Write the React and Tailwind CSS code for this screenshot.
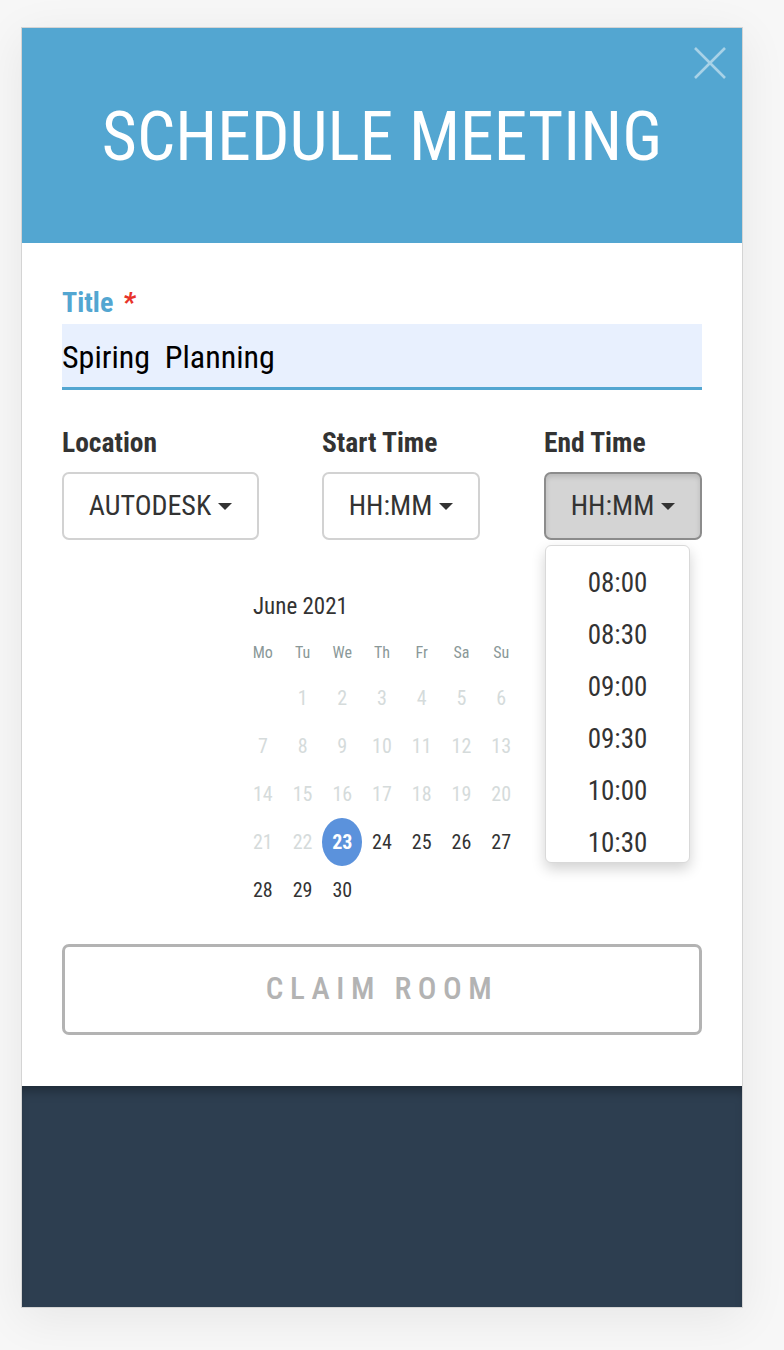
import React from "react";

function Caret() {
  return (
    <span className="ml-[7px] inline-block h-0 w-0 border-x-[7px] border-t-[7px] border-x-transparent border-t-[#333]" />
  );
}

function Dropdown({ value, width, active }) {
  return (
    <button
      className={
        "flex h-[68px] items-center justify-center rounded-[7px] border-2 text-[28px] text-[#333] " +
        (active
          ? "border-[#8c8c8c] bg-[#d4d4d4] shadow-[inset_0_3px_5px_rgba(0,0,0,0.125)]"
          : "border-[#d2d2d2] bg-white")
      }
      style={{ width }}
    >
      <span>{value}</span>
      <Caret />
    </button>
  );
}

export default function App() {
  const days = [null];
  for (let d = 1; d <= 30; d++) days.push(d);
  const heads = ["Mo", "Tu", "We", "Th", "Fr", "Sa", "Su"];
  const times = ["08:00", "08:30", "09:00", "09:30", "10:00", "10:30"];

  return (
    <div className="min-h-screen bg-[#f7f7f7] pl-[21px] pt-[27px] font-['Roboto_Condensed','Roboto',sans-serif]">
      <div className="w-[722px] border border-[#d4d4d4] bg-white shadow-[0_10px_45px_rgba(0,0,0,0.07)]">
        {/* Header */}
        <div className="relative flex h-[215px] items-center justify-center bg-[#53a6d1] pt-[4px]">
          <h1 className="text-[67.7px] font-normal leading-none text-white">
            SCHEDULE MEETING
          </h1>
          <button className="absolute right-[15px] top-[18px] h-[34px] w-[34px]">
            <svg viewBox="0 0 34 34" width="34" height="34">
              <path d="M2 2 L32 32 M32 2 L2 32" stroke="#a8d2e7" strokeWidth="2.6" fill="none" />
            </svg>
          </button>
        </div>

        {/* Body */}
        <div className="px-[40px] pb-[51px] pt-[43px]">
          <label className="block text-[28px] font-bold leading-[34px] text-[#53a6d1]">
            Title <span className="ml-[3px] italic text-[#e8332a]">*</span>
          </label>
          <div className="mt-[4px] flex h-[66px] items-center border-b-[3px] border-[#53a6d1] bg-[#e8f0fe] pt-[3px]">
            <span className="whitespace-pre text-[32px] text-black">Spiring  Planning</span>
          </div>

          <div className="relative mt-[36px] flex">
            <div className="w-[260px]">
              <div className="text-[27.5px] font-bold leading-[34px] text-[#333]">Location</div>
              <div className="mt-[12px]">
                <Dropdown value="AUTODESK" width={197} />
              </div>
            </div>
            <div className="w-[222px]">
              <div className="text-[27.5px] font-bold leading-[34px] text-[#333]">Start Time</div>
              <div className="mt-[12px]">
                <Dropdown value="HH:MM" width={158} />
              </div>
            </div>
            <div className="flex-1">
              <div className="text-[27.5px] font-bold leading-[34px] text-[#333]">End Time</div>
              <div className="mt-[12px]">
                <Dropdown value="HH:MM" width={158} active />
              </div>
            </div>

            {/* Open menu */}
            <div className="absolute left-[483px] top-[119px] z-10 h-[318px] w-[145px] overflow-hidden rounded-[6px] border border-[#d9d9d9] bg-white pt-[11px] shadow-[0_6px_14px_rgba(0,0,0,0.18)]">
              {times.map((t) => (
                <div
                  key={t}
                  className="flex h-[52px] items-center justify-center text-[27px] text-[#333]"
                >
                  {t}
                </div>
              ))}
            </div>
          </div>

          {/* Calendar */}
          <div className="mx-auto mt-[52px] w-[278px]">
            <div className="pl-[10px] text-[23px] leading-[30px] text-[#333]">June 2021</div>
            <div className="mt-[19px] grid grid-cols-7">
              {heads.map((h) => (
                <div key={h} className="flex h-[24px] items-center justify-center text-[16px] text-[#8a9898]">
                  {h}
                </div>
              ))}
            </div>
            <div className="mt-[9px] grid grid-cols-7">
              {days.map((d, i) => {
                if (d === null) return <div key={"e" + i} className="h-[48px]" />;
                const past = d < 23;
                const sel = d === 23;
                return (
                  <div
                    key={d}
                    className={
                      "flex h-[48px] items-center justify-center rounded-[50%] text-[20px] " +
                      (sel
                        ? "bg-[#5b92dc] font-bold text-white"
                        : past
                        ? "text-[#d5dbdb]"
                        : "text-[#333]")
                    }
                  >
                    {d}
                  </div>
                );
              })}
            </div>
          </div>

          <button className="mt-[30px] flex h-[91px] w-full items-center justify-center rounded-[7px] border-[3px] border-[#b3b3b3] bg-white text-[31px] font-medium tracking-[6.5px] text-[#b3b3b3]">
            CLAIM ROOM
          </button>
        </div>

        {/* Dark footer */}
        <div className="h-[221px] bg-[#2d3e50] shadow-[inset_0_10px_12px_-6px_rgba(0,0,0,0.35)]" />
      </div>
    </div>
  );
}
